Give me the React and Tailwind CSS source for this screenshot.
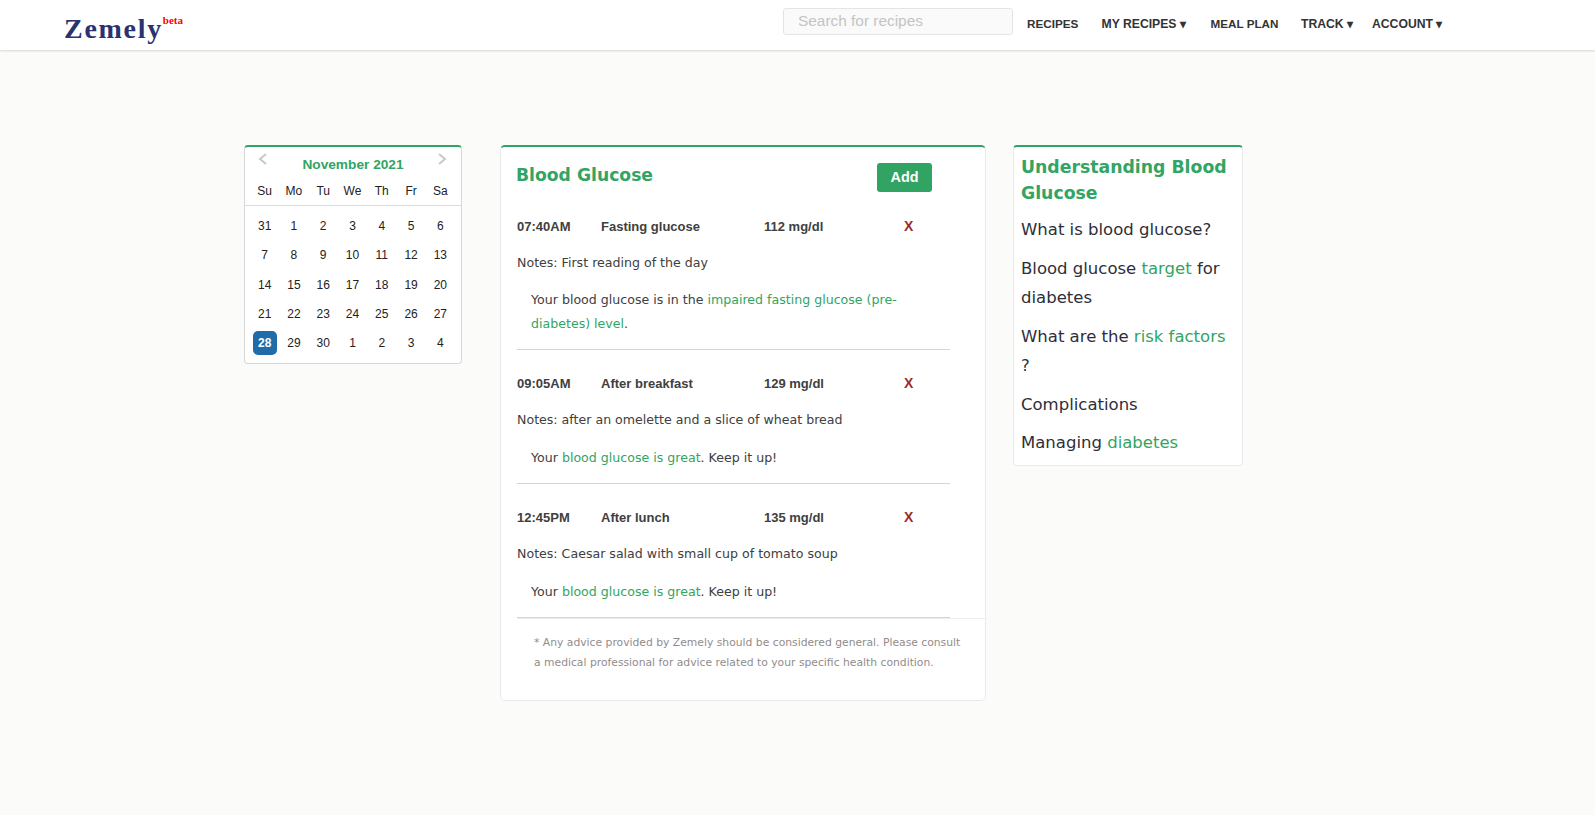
const green = "text-[#32a463]";

const semanas = [
  [31, 1, 2, 3, 4, 5, 6],
  [7, 8, 9, 10, 11, 12, 13],
  [14, 15, 16, 17, 18, 19, 20],
  [21, 22, 23, 24, 25, 26, 27],
  [28, 29, 30, 1, 2, 3, 4],
];

const lecturas = [
  {
    hora: "07:40AM",
    tipo: "Fasting glucose",
    valor: "112 mg/dl",
    notas: "Notes: First reading of the day",
    caja: "pb-[13px] mb-[26.5px]",
    texto: "mt-[14.5px] leading-[24px]",
    mensaje: (
      <>
        Your blood glucose is in the <span className={green}>impaired fasting glucose (pre-diabetes) level</span>.
      </>
    ),
  },
  {
    hora: "09:05AM",
    tipo: "After breakfast",
    valor: "129 mg/dl",
    notas: "Notes: after an omelette and a slice of wheat bread",
    caja: "pb-[13px] mb-[25.5px]",
    texto: "mt-[15.5px] leading-[24.5px]",
    mensaje: (
      <>
        Your <span className={green}>blood glucose is great</span>. Keep it up!
      </>
    ),
  },
  {
    hora: "12:45PM",
    tipo: "After lunch",
    valor: "135 mg/dl",
    notas: "Notes: Caesar salad with small cup of tomato soup",
    caja: "pb-[12.5px] mb-[24.5px]",
    texto: "mt-[16.5px] leading-[24.5px]",
    mensaje: (
      <>
        Your <span className={green}>blood glucose is great</span>. Keep it up!
      </>
    ),
  },
];

const Header = () => (
  <header className="h-[50px] bg-white shadow-[0_1px_2px_rgba(0,0,0,0.15)] flex items-start font-['Liberation_Sans',sans-serif]">
    <div className="ml-[64px] mt-[10px] font-['Liberation_Serif',serif] font-bold text-[28px] leading-[38px] tracking-[1.7px] text-[#2b3270]">
      Zemely
    </div>
    <span className="mt-[14px] font-['Liberation_Serif',serif] font-bold text-[11px] leading-[13px] text-[#ff0000]">beta</span>
    <div className="ml-[600px] mt-[8px] w-[230px] h-[27px] bg-[#fafafa] border border-[#e4e4e4] rounded-[3px] pl-[14px] text-[15.4px] leading-[24px] text-[#c4c4c4]">
      Search for recipes
    </div>
    <nav className="flex mt-[16px] text-[12.2px] leading-[16px] font-bold text-[#333] whitespace-nowrap">
      <span className="ml-[14px] w-[74.5px] text-[11.7px]">RECIPES</span>
      <span className="w-[109px]">MY RECIPES ▾</span>
      <span className="w-[90.5px] text-[11.7px]">MEAL PLAN</span>
      <span className="w-[71px]">TRACK ▾</span>
      <span>ACCOUNT ▾</span>
    </nav>
  </header>
);

const Calendario = () => (
  <div className="w-[218px] h-[219px] bg-white border border-[#d8d8d8] border-t-2 border-t-[#31a362] rounded-[4px] font-['Liberation_Sans',sans-serif] text-[12px] text-[#222]">
    <div className="relative h-[35px] text-center">
      <svg className="absolute left-[13px] top-[5px]" width="10" height="14" viewBox="0 0 10 14" fill="none" stroke="#c8c8c8" strokeWidth="2"><path d="M8 2L2 7l6 5" /></svg>
      <svg className="absolute right-[14px] top-[5px]" width="10" height="14" viewBox="0 0 10 14" fill="none" stroke="#c8c8c8" strokeWidth="2"><path d="M2 2l6 5-6 5" /></svg>
      <span className={`block pt-[10px] font-bold text-[13.7px] leading-[16px] ${green}`}>November 2021</span>
    </div>
    <div className="grid grid-cols-7 h-[24px] pl-[5px] pr-[6px] text-center leading-[18px] border-b border-[#dcdcdc]">
      {["Su", "Mo", "Tu", "We", "Th", "Fr", "Sa"].map((d) => (
        <span key={d}>{d}</span>
      ))}
    </div>
    <div className="grid grid-cols-7 pl-[5px] pr-[6px] pt-[5.5px] text-center">
      {semanas.flat().map((d, i) => (
        <span key={i} className="h-[29.3px] flex items-center justify-center">
          {d === 28 ? (
            <span className="w-[24px] h-[24px] bg-[#206ca8] text-white font-bold rounded-[5px] flex items-center justify-center">{d}</span>
          ) : (
            d
          )}
        </span>
      ))}
    </div>
  </div>
);

const Lectura = ({ l }) => (
  <div className={`relative z-10 w-[433px] border-b border-[#d4d4d4] ${l.caja}`}>
    <div className="flex items-center h-[16px] font-['Liberation_Sans',sans-serif] font-bold text-[13px] text-[#404040]">
      <span className="w-[84px]">{l.hora}</span>
      <span className="w-[163px]">{l.tipo}</span>
      <span className="w-[140px]">{l.valor}</span>
      <span className="-mt-[1px] text-[#9b2c2c] text-[14px]">X</span>
    </div>
    <p className="mt-[18px] text-[12.6px] leading-[20px] text-[#404040]">{l.notas}</p>
    <p className={`pl-[14px] pr-[40px] text-[12.6px] text-[#404040] ${l.texto}`}>{l.mensaje}</p>
  </div>
);

const Principal = () => (
  <div className="w-[486px] h-[556px] bg-white border border-[#eaeaea] border-t-2 border-t-[#31a362] rounded-[5px] font-['DejaVu_Sans',sans-serif]">
    <div className="relative h-[72px] pl-[15px]">
      <h2 className={`pt-[16px] font-bold text-[17.2px] leading-[24px] ${green}`}>Blood Glucose</h2>
      <button className="absolute left-[376px] top-[16px] w-[55px] h-[29px] bg-[#31a362] rounded-[3px] text-white font-['Liberation_Sans',sans-serif] font-bold text-[14.4px]">Add</button>
    </div>
    <div className="pl-[16px]">
      {lecturas.map((l) => (
        <Lectura key={l.hora} l={l} />
      ))}
    </div>
    <div className="-mt-[24.5px] ml-[16px] border-t border-[#eeeeee] pt-[13.5px] pl-[17px] pr-[18px] text-[10.77px] leading-[20px] text-[#918c8c]">
      * Any advice provided by Zemely should be considered general. Please consult a medical professional for advice related to your specific health condition.
    </div>
  </div>
);

const Lateral = () => (
  <div className="w-[230px] h-[321px] bg-white border border-[#eaeaea] border-t-2 border-t-[#31a362] rounded-[4px] pl-[7px] font-['DejaVu_Sans',sans-serif] text-[16.5px] text-[#2e2e38]">
    <h3 className={`pt-[7px] font-bold text-[17.3px] leading-[26px] ${green}`}>Understanding Blood Glucose</h3>
    <p className="mt-[9px] leading-[29.5px]">What is blood glucose?</p>
    <p className="mt-[9px] leading-[29.5px]">
      Blood glucose <span className={green}>target</span> for diabetes
    </p>
    <p className="mt-[9px] leading-[29.5px]">
      What are the <span className={green}>risk factors</span>
      <br />?
    </p>
    <p className="mt-[9px] leading-[29.5px]">Complications</p>
    <p className="mt-[9px] leading-[29.5px]">
      Managing <span className={green}>diabetes</span>
    </p>
  </div>
);

export default function App() {
  return (
    <div className="min-h-[815px] bg-[#fbfbf9]">
      <Header />
      <div className="flex items-start pt-[95px] pl-[244px]">
        <Calendario />
        <div className="ml-[38px]">
          <Principal />
        </div>
        <div className="ml-[27px]">
          <Lateral />
        </div>
      </div>
    </div>
  );
}
